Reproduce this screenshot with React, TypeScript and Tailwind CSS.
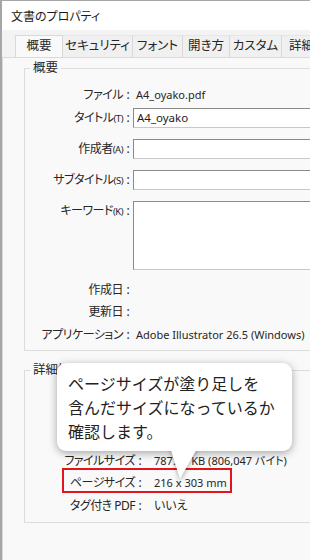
import React from "react";

const jp = "font-['Noto_Sans','Noto_Sans_CJK_JP',sans-serif] [font-feature-settings:'palt']";

function Colon() {
  return <span className="inline-block w-[10px] text-center tracking-normal">:</span>;
}

function Label({ children, w }: { children: React.ReactNode; w: string }) {
  return (
    <div className={`${w} shrink-0 text-right whitespace-nowrap tracking-[-0.5px]`}>
      {children}
      <Colon />
    </div>
  );
}

function Input({ value, h = "h-[20px]" }: { value?: string; h?: string }) {
  return (
    <div
      className={`${h} flex-1 bg-white border border-[#c8c8c8] border-t-[#8a8a8a] border-l-[#8a8a8a] border-r-0 pl-[3px] leading-[18px] text-[11.5px] text-[#1a1a1a]`}
    >
      {value}
    </div>
  );
}

function Small({ children }: { children: React.ReactNode }) {
  return <span className="text-[9.5px]">{children}</span>;
}

export default function App() {
  const tabs = [
    { t: "概要", w: "w-[48px]", sel: true },
    { t: "セキュリティ", w: "w-[70px]" },
    { t: "フォント", w: "w-[50px]" },
    { t: "開き方", w: "w-[47px]" },
    { t: "カスタム", w: "w-[52px]" },
    { t: "詳細", w: "w-[40px]" },
  ];
  return (
    <div
      className={`relative w-[310px] h-[560px] overflow-hidden bg-[#f3f3f3] border-l-[2px] border-t border-[#a6a6a6] text-[12px] text-[#262626] ${jp}`}
    >
      {/* title bar */}
      <div className="h-[29px] bg-white flex items-center pl-[9px] pt-[2px] text-[12px] text-[#1a1a1a]">
        文書のプロパティ
      </div>
      {/* tabs */}
      <div className="h-[27px] flex items-end pl-[13px]">
        <div className="flex h-[22px] whitespace-nowrap">
          {tabs.map((tab) => (
            <div
              key={tab.t}
              className={`${tab.w} shrink-0 h-full flex items-center justify-center text-[12.5px] ${
                tab.sel
                  ? "bg-[#f9f9f9] border border-b-0 border-[#d9d9d9]"
                  : "bg-[#f0f0f0] border-r border-[#d9d9d9] border-t border-t-[#e6e6e6]"
              }`}
            >
              {tab.t}
            </div>
          ))}
        </div>
      </div>
      {/* content panel */}
      <div className="relative h-[600px] bg-[#f9f9f9] border-t border-l border-[#dadada] pl-[21px] pt-[2px]">
        {/* group 1 */}
        <fieldset className="border border-[#dcdcdc] mr-[-30px] px-0 pt-0 pb-[4px] m-0">
          <legend className="ml-[5px] px-[3px] leading-[16px] text-[12.5px]">概要</legend>
          <div className="flex flex-col pt-[8px] pr-[20px]">
            <div className="flex items-center h-[22px]">
              <Label w="w-[108px]">ファイル</Label>
              <div className="pl-[3px] text-[11px]">A4_oyako.pdf</div>
            </div>
            <div className="flex items-center h-[20px] mt-[2px]">
              <Label w="w-[108px]">
                タイトル<Small>(T)</Small>
              </Label>
              <Input value="A4_oyako" />
            </div>
            <div className="flex items-center h-[20px] mt-[11px]">
              <Label w="w-[108px]">
                作成者<Small>(A)</Small>
              </Label>
              <Input />
            </div>
            <div className="flex items-center h-[20px] mt-[11px]">
              <Label w="w-[108px]">
                サブタイトル<Small>(S)</Small>
              </Label>
              <Input />
            </div>
            <div className="flex items-start h-[69px] mt-[11px]">
              <div className="w-[108px] shrink-0 text-right pt-[1px] whitespace-nowrap tracking-[-0.5px]">
                キーワード<Small>(K)</Small>
                <Colon />
              </div>
              <Input h="h-[69px]" />
            </div>
            <div className="flex items-center h-[22px] mt-[9px]">
              <Label w="w-[108px]">作成日</Label>
            </div>
            <div className="flex items-center h-[22px]">
              <Label w="w-[108px]">更新日</Label>
            </div>
            <div className="flex items-center h-[22px] mt-[1px]">
              <Label w="w-[108px]">アプリケーション</Label>
              <div className="pl-[3px] text-[11px] whitespace-nowrap">Adobe Illustrator 26.5 (Windows)</div>
            </div>
          </div>
        </fieldset>

        {/* group 2 */}
        <fieldset className="relative border border-[#dcdcdc] mr-[-30px] mt-[11px] px-0 pt-0 pb-[5px] m-0">
          <legend className="ml-[5px] px-[3px] leading-[16px] text-[12.5px]">詳細情報</legend>
          <div className="flex flex-col pt-[72px]">
            <div className="flex items-center h-[22px]">
              <Label w="w-[120px]">ファイルサイズ</Label>
              <div className="pl-[9px] whitespace-nowrap text-[11px]">787.15 KB (806,047 バイト)</div>
            </div>
            <div className="flex items-center h-[22px]">
              <Label w="w-[120px]">ページサイズ</Label>
              <div className="pl-[9px] whitespace-nowrap text-[11px]">216 x 303 mm</div>
            </div>
            <div className="flex items-center h-[22px] mt-[1px]">
              <Label w="w-[120px]">タグ付き PDF</Label>
              <div className="pl-[9px] whitespace-nowrap">いいえ</div>
            </div>
          </div>
          {/* red highlight box */}
          <div className="absolute left-[37px] top-[90px] w-[170px] h-[25px] border-[2.5px] border-[#e3141b]" />
        </fieldset>
      </div>

      {/* callout bubble */}
      <div className="absolute left-[55px] top-[362px] w-[235px] h-[88px] bg-white rounded-[9px] shadow-[0_2px_8px_rgba(0,0,0,0.35)] pl-[11px] pt-[8px] text-[16px] leading-[24px] text-[#222] font-['Noto_Sans_CJK_JP',sans-serif] [font-feature-settings:normal]">
        <div>ページサイズが塗り足しを</div>
        <div>含んだサイズになっているか</div>
        <div>確認します。</div>
      </div>
      <svg
        className="absolute left-[166px] top-[446px] drop-shadow-[0_2px_2px_rgba(0,0,0,0.3)]"
        width="34"
        height="34"
        viewBox="0 0 34 34"
      >
        <path d="M2 0 L30 0 L12 32 Z" fill="#fff" />
      </svg>
      <div className="absolute left-[160px] top-[440px] w-[40px] h-[10px] bg-white" />
    </div>
  );
}
